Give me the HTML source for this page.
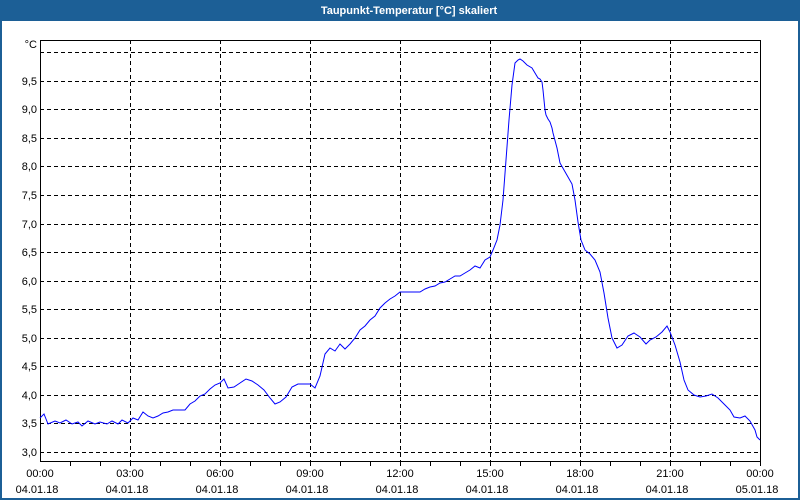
<!DOCTYPE html>
<html><head><meta charset="utf-8"><style>
html,body{margin:0;padding:0;background:#fff;}
svg{display:block;}
text{font-family:"Liberation Sans",sans-serif;font-size:11px;fill:#000;}
</style></head><body>
<svg width="800" height="500" viewBox="0 0 800 500" xmlns="http://www.w3.org/2000/svg">
<rect x="0" y="0" width="800" height="500" fill="#fff"/>
<rect x="0" y="0" width="800" height="21" fill="#1c5f96"/>
<rect x="0" y="0" width="2" height="500" fill="#1c5f96"/>
<rect x="798" y="0" width="2" height="500" fill="#1c5f96"/>
<rect x="0" y="498" width="800" height="2" fill="#1c5f96"/>
<text x="409" y="14" text-anchor="middle" style="font-weight:bold;fill:#fff;font-size:11px">Taupunkt-Temperatur [°C] skaliert</text>
<g stroke="#000" stroke-width="1" stroke-dasharray="4,3" fill="none">
<path d="M40 52.5H760M40 81.5H760M40 109.5H760M40 138.5H760M40 166.5H760M40 195.5H760M40 224.5H760M40 252.5H760M40 281.5H760M40 309.5H760M40 338.5H760M40 366.5H760M40 395.5H760M40 423.5H760M40 452.5H760"/>
<path d="M130.5 40V461M220.5 40V461M310.5 40V461M400.5 40V461M490.5 40V461M580.5 40V461M670.5 40V461"/>
</g>
<g stroke="#000" stroke-width="1" fill="none">
<path d="M40.5 40V461.5H760.5V40M40 40.5H760"/>
<path d="M70.5 461V466M100.5 461V466M130.5 461V466M160.5 461V466M190.5 461V466M220.5 461V466M250.5 461V466M280.5 461V466M310.5 461V466M340.5 461V466M370.5 461V466M400.5 461V466M430.5 461V466M460.5 461V466M490.5 461V466M520.5 461V466M550.5 461V466M580.5 461V466M610.5 461V466M640.5 461V466M670.5 461V466M700.5 461V466M730.5 461V466M760.5 461V466"/>
</g>
<g text-anchor="end">
<text x="37" y="48">°C</text>
<text x="37" y="85">9,5</text><text x="37" y="113">9,0</text><text x="37" y="142">8,5</text><text x="37" y="170">8,0</text><text x="37" y="199">7,5</text><text x="37" y="228">7,0</text><text x="37" y="256">6,5</text><text x="37" y="285">6,0</text><text x="37" y="313">5,5</text><text x="37" y="342">5,0</text><text x="37" y="370">4,5</text><text x="37" y="399">4,0</text><text x="37" y="427">3,5</text><text x="37" y="456">3,0</text>
</g>
<g text-anchor="middle">
<text x="40" y="477">00:00</text><text x="130" y="477">03:00</text><text x="220" y="477">06:00</text><text x="310" y="477">09:00</text><text x="400" y="477">12:00</text><text x="490" y="477">15:00</text><text x="580" y="477">18:00</text><text x="670" y="477">21:00</text><text x="760" y="477">00:00</text>
<text x="37" y="493">04.01.18</text><text x="127" y="493">04.01.18</text><text x="217" y="493">04.01.18</text><text x="307" y="493">04.01.18</text><text x="397" y="493">04.01.18</text><text x="487" y="493">04.01.18</text><text x="577" y="493">04.01.18</text><text x="667" y="493">04.01.18</text><text x="757" y="493">05.01.18</text>
</g>
<polyline fill="none" stroke="#0000ff" stroke-width="1" points="40,418 44,414 48,424 55,421 60,423 66,420 72,424 78,422 82,426 88,421 95,424 100,422 107,424 112,421 118,424 122,420 128,423 133,418 138,420 143,412 148,416 153,418 158,416 163,413 168,412 173,410 180,410 185,410 190,404 195,401 200,396 205,394 210,389 215,385 220,383 224,379 228,388 234,387 240,383 246,379 252,381 258,385 264,390 270,398 275,404 280,402 286,397 292,387 298,384 305,384 310,384 315,388 320,376 325,354 330,348 335,351 340,344 345,349 350,344 355,338 360,330 365,326 370,320 375,316 380,308 385,303 390,299 395,296 400,292 405,292 410,292 415,292 420,292 425,289 430,287 435,286 440,283 445,282 450,279 455,276 460,276 465,273 470,270 475,266 480,268 485,260 490,257 493,250 497,240 500,225 503,200 506,160 509,120 512,85 515,63 518,60 520,59 523,61 527,65 532,68 535,73 538,78 540,79 542,82 543,90 545,110 546,115 548,119 550,122 552,128 553,133 557,148 560,163 564,170 568,177 572,184 575,200 578,222 581,240 585,250 590,254 595,260 600,272 604,293 608,318 612,338 617,348 622,345 628,336 634,333 640,337 646,344 650,340 656,337 662,332 667,326 670,332 675,345 680,362 684,380 688,390 694,395 700,397 706,396 712,394 718,398 724,404 730,410 734,417 740,418 745,416 750,421 755,430 757,437 760,440"/>
</svg>
</body></html>
